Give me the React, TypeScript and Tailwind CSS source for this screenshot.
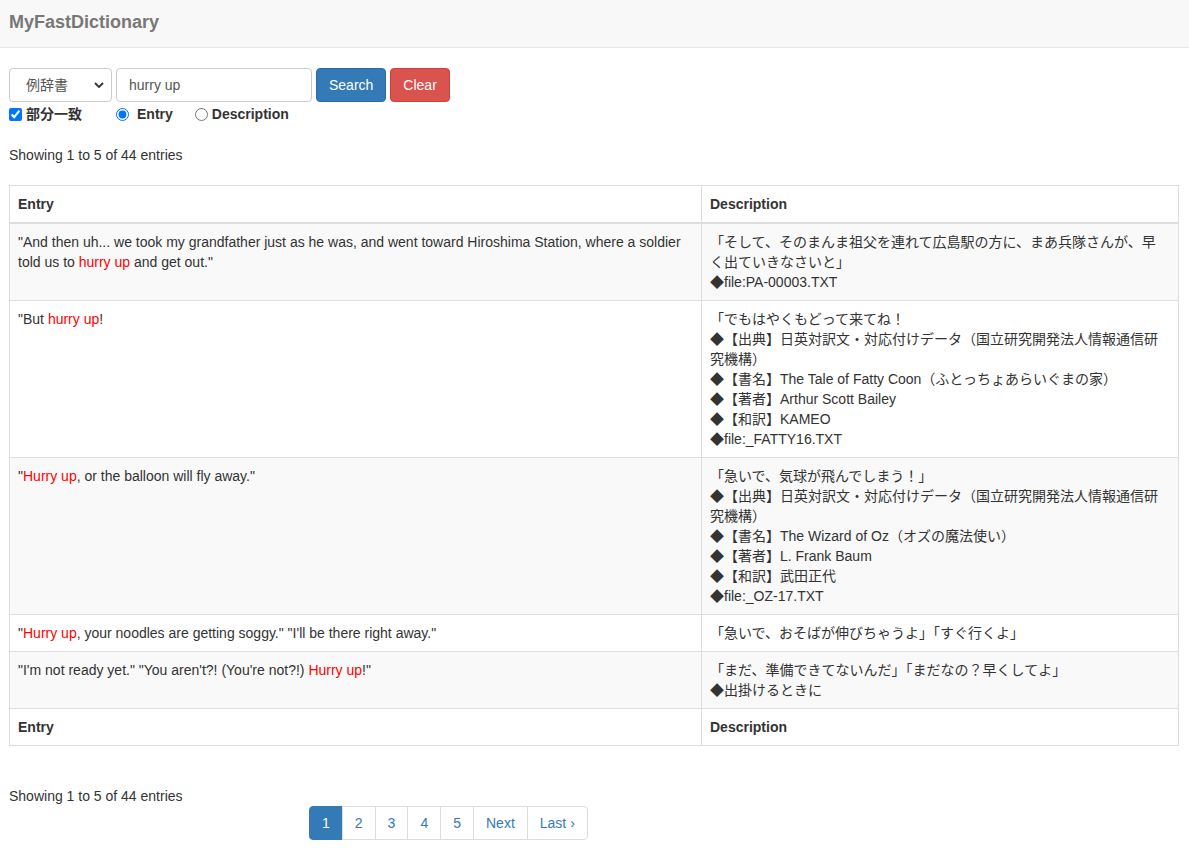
import React from "react";

const font = { fontFamily: '"Liberation Sans", Arial, "Noto Sans CJK JP", sans-serif' };

type Row = { entry: React.ReactNode; desc: string[] };

const Hl = ({ children }: { children: React.ReactNode }) => <span className="text-[#ff0000]">{children}</span>;

const SRC = "◆【出典】日英対訳文・対応付けデータ（国立研究開発法人情報通信研究機構）";

const rows: Row[] = [
  {
    entry: (
      <>
        "And then uh... we took my grandfather just as he was, and went toward Hiroshima Station, where a soldier told us to{" "}
        <Hl>hurry up</Hl> and get out."
      </>
    ),
    desc: ["「そして、そのまんま祖父を連れて広島駅の方に、まあ兵隊さんが、早く出ていきなさいと」", "◆file:PA-00003.TXT"],
  },
  {
    entry: (
      <>
        "But <Hl>hurry up</Hl>!
      </>
    ),
    desc: [
      "「でもはやくもどって来てね！",
      SRC,
      "◆【書名】The Tale of Fatty Coon（ふとっちょあらいぐまの家）",
      "◆【著者】Arthur Scott Bailey",
      "◆【和訳】KAMEO",
      "◆file:_FATTY16.TXT",
    ],
  },
  {
    entry: (
      <>
        "<Hl>Hurry up</Hl>, or the balloon will fly away."
      </>
    ),
    desc: [
      "「急いで、気球が飛んでしまう！」",
      SRC,
      "◆【書名】The Wizard of Oz（オズの魔法使い）",
      "◆【著者】L. Frank Baum",
      "◆【和訳】武田正代",
      "◆file:_OZ-17.TXT",
    ],
  },
  {
    entry: (
      <>
        "<Hl>Hurry up</Hl>, your noodles are getting soggy." "I'll be there right away."
      </>
    ),
    desc: ["「急いで、おそばが伸びちゃうよ」「すぐ行くよ」"],
  },
  {
    entry: (
      <>
        "I'm not ready yet." "You aren't?! (You're not?!) <Hl>Hurry up</Hl>!"
      </>
    ),
    desc: ["「まだ、準備できてないんだ」「まだなの？早くしてよ」", "◆出掛けるときに"],
  },
];

function Pagination() {
  const items = ["1", "2", "3", "4", "5", "Next", "Last ›"];
  return (
    <ul className="flex ml-[300px]">
      {items.map((it, i) => (
        <li key={it}>
          <a
            className={
              "block h-[34px] px-[12px] py-[6px] leading-[20px] border " +
              (i === 0
                ? "bg-[#337ab7] border-[#337ab7] text-white rounded-l-[4px]"
                : "bg-white border-[#ddd] text-[#337ab7] -ml-px") +
              (i === items.length - 1 ? " rounded-r-[4px]" : "")
            }
          >
            {it}
          </a>
        </li>
      ))}
    </ul>
  );
}

export default function App() {
  return (
    <div className="min-h-screen bg-white text-[14px] leading-[20px] text-[#333]" style={font}>
      {/* navbar */}
      <div className="h-[48px] bg-[#f8f8f8] border-b border-[#e7e7e7] flex items-center pb-[4px] px-[9px]">
        <span className="text-[18px] font-bold text-[#777]">MyFastDictionary</span>
      </div>

      <div className="px-[9px] pr-[10px]">
        {/* search form */}
        <div className="flex mt-[20px] gap-[4px]">
          <div className="relative w-[103px] h-[34px]">
            <select className="appearance-none w-full h-full border border-[#ccc] rounded-[4px] bg-white pl-[16px] text-[#555] outline-none">
              <option>例辞書</option>
            </select>
            <svg className="absolute right-[8px] top-[13px] w-[10px] h-[8px] pointer-events-none" viewBox="0 0 10 8">
              <path d="M1 2l4 4 4-4" fill="none" stroke="#333" strokeWidth="1.8" />
            </svg>
          </div>
          <input
            defaultValue="hurry up"
            className="w-[196px] h-[34px] border border-[#ccc] rounded-[4px] px-[12px] text-[#555] outline-none"
          />
          <button className="h-[34px] px-[12px] bg-[#337ab7] border border-[#2e6da4] rounded-[4px] text-white">Search</button>
          <button className="h-[34px] px-[12px] bg-[#d9534f] border border-[#d43f3a] rounded-[4px] text-white">Clear</button>
        </div>

        <div className="flex items-center h-[20px] mt-[2px] font-bold">
          <label className="flex items-center">
            <input type="checkbox" defaultChecked className="w-[13px] h-[13px] m-0 mr-[4px]" />
            部分一致
          </label>
          <label className="flex items-center ml-[34px]">
            <input type="radio" name="t" defaultChecked className="w-[13px] h-[13px] m-0 mr-[8px]" />
            Entry
          </label>
          <label className="flex items-center ml-[22px]">
            <input type="radio" name="t" className="w-[13px] h-[13px] m-0 mr-[4px]" />
            Description
          </label>
        </div>

        <div className="mt-[21px]">Showing 1 to 5 of 44 entries</div>

        {/* table */}
        <table className="w-full mt-[20px] border-collapse border border-[#ddd] table-fixed">
          <colgroup>
            <col className="w-[692px]" />
            <col />
          </colgroup>
          <thead>
            <tr>
              <th className="text-left p-[8px] border border-[#ddd] border-b-2">Entry</th>
              <th className="text-left p-[8px] border border-[#ddd] border-b-2">Description</th>
            </tr>
          </thead>
          <tbody>
            {rows.map((r, i) => (
              <tr key={i} className={i % 2 === 0 ? "bg-[#f9f9f9]" : "bg-white"}>
                <td className="align-top p-[8px] border border-[#ddd]">{r.entry}</td>
                <td className="align-top p-[8px] pr-[11px] border border-[#ddd]">
                  {r.desc.map((d, j) => (
                    <div key={j}>{d}</div>
                  ))}
                </td>
              </tr>
            ))}
          </tbody>
          <tfoot>
            <tr>
              <th className="text-left p-[8px] border border-[#ddd]">Entry</th>
              <th className="text-left p-[8px] border border-[#ddd]">Description</th>
            </tr>
          </tfoot>
        </table>

        <div className="mt-[40px]">Showing 1 to 5 of 44 entries</div>
        <Pagination />
      </div>
    </div>
  );
}
